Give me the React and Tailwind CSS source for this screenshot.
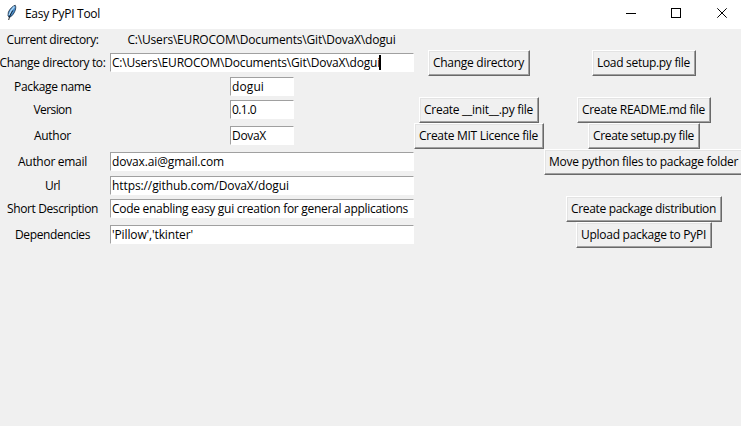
import { useLayoutEffect, useRef } from "react";

// Text tracked so that its advance, with a one pixel side bearing, equals the given width.
function Text({ width, children }) {
  const ref = useRef(null);
  useLayoutEffect(() => {
    const el = ref.current;
    const fit = () => {
      el.style.letterSpacing = "0px";
      const natural = el.getBoundingClientRect().width;
      el.style.letterSpacing = `${(width - 1 - natural) / children.length}px`;
    };
    fit();
    document.fonts?.ready.then(fit);
  }, [width, children]);
  return (
    <span ref={ref} className="mr-px inline-block leading-[17px] whitespace-pre">
      {children}
    </span>
  );
}

function Button({ text, width }) {
  return (
    <button className="flex h-[26px] shrink-0 items-start border border-t-white border-r-[#696969] border-b-[#696969] border-l-white bg-[#f0f0f0] px-1 pt-[3px] shadow-[inset_-1px_-1px_0_#a0a0a0,inset_1px_1px_0_#e3e3e3]">
      <Text width={width}>{text}</Text>
    </button>
  );
}

function Entry({ text, width, small, caret }) {
  return (
    <div
      className={`${small ? "w-16" : "w-[304px]"} flex h-[19px] items-center border border-t-[#a0a0a0] border-r-white border-b-white border-l-[#a0a0a0] bg-white pl-px`}
    >
      <Text width={width}>{text}</Text>
      {caret && <span className="-ml-[2px] h-[15px] w-0.5 bg-black" />}
    </div>
  );
}

const rows = [
  { label: ["Current directory:", 93], plain: ["C:\\Users\\EUROCOM\\Documents\\Git\\DovaX\\dogui", 269] },
  {
    tall: true,
    label: ["Change directory to:", 107],
    entry: ["C:\\Users\\EUROCOM\\Documents\\Git\\DovaX\\dogui", 269],
    caret: true,
    a: ["Change directory", 92],
    b: ["Load setup.py file", 94],
  },
  { label: ["Package name", 78], entry: ["dogui", 33], small: true },
  {
    tall: true,
    label: ["Version", 39],
    entry: ["0.1.0", 25],
    small: true,
    a: ["Create __init__.py file", 110],
    b: ["Create README.md file", 124],
  },
  {
    tall: true,
    label: ["Author", 38],
    entry: ["DovaX", 35],
    small: true,
    a: ["Create MIT Licence file", 120],
    b: ["Create setup.py file", 102],
  },
  { tall: true, label: ["Author email", 70], entry: ["dovax.ai@gmail.com", 113], b: ["Move python files to package folder", 190] },
  { label: ["Url", 16], entry: ["https://github.com/DovaX/dogui", 178] },
  {
    tall: true,
    label: ["Short Description", 92],
    entry: ["Code enabling easy gui creation for general applications", 297],
    b: ["Create package distribution", 146],
  },
  { tall: true, label: ["Dependencies", 76], entry: ["'Pillow','tkinter'", 82], b: ["Upload package to PyPI", 126] },
];

function Feather() {
  return (
    <svg width="12" height="18" viewBox="0 0 12 18">
      <path d="M9.2 1.2C6.5 2.2 3.5 5.2 2.4 8.2L2 11.5 3 13.3C5.5 13 8 9.6 9.2 6.4 9.9 4.4 10 2.4 9.2 1.2Z" fill="#4a90d0" stroke="#18283c" strokeWidth="0.8" />
      <path d="M8.4 2.5C5.8 5 4 8 3.2 11" stroke="#a9d4f5" strokeWidth="1.6" fill="none" />
      <path d="M6.8 6.5C5 9.4 3.3 12.4 2.7 16" stroke="#080c12" strokeWidth="0.9" fill="none" />
    </svg>
  );
}

export default function App() {
  return (
    <div className="flex h-[426px] w-[741px] flex-col overflow-hidden bg-[#f0f0f0] font-['Open_Sans','Noto_Sans',sans-serif] text-[12px] text-black">
      <header className="flex h-[29px] shrink-0 items-start bg-white pl-1.5">
        <div className="pt-1">
          <Feather />
        </div>
        <div className="pt-[5px] pl-[7px]">
          <Text width={76}>Easy PyPI Tool</Text>
        </div>
        <div className="ml-auto pt-2">
          <svg width="116" height="12" viewBox="0 0 116 12" fill="none" stroke="#000">
            <path d="M1 5.5H11" />
            <rect x="46.5" y="0.5" width="9" height="9" />
            <path d="M92.3 0.3L101.7 9.7M101.7 0.3L92.3 9.7" />
          </svg>
        </div>
      </header>
      <main className="w-[744px]">
        {rows.map((row) => (
          <div
            key={row.label[0]}
            className={`${row.tall ? "h-[26px]" : "h-[21px]"} grid grid-cols-[110px_304px_130px_200px] items-start`}
          >
            <div className={`${row.tall ? "pt-1" : "pt-0.5"} flex justify-center pr-1`}>
              <Text width={row.label[1]}>{row.label[0]}</Text>
            </div>
            <div className={`${row.tall ? "pt-[3px]" : row.plain ? "pt-0.5" : "pt-px"} flex justify-center`}>
              {row.plain && <Text width={row.plain[1]}>{row.plain[0]}</Text>}
              {row.entry && <Entry text={row.entry[0]} width={row.entry[1]} small={row.small} caret={row.caret} />}
            </div>
            <div className="flex justify-center">{row.a && <Button text={row.a[0]} width={row.a[1]} />}</div>
            <div className="flex justify-center">{row.b && <Button text={row.b[0]} width={row.b[1]} />}</div>
          </div>
        ))}
      </main>
    </div>
  );
}
